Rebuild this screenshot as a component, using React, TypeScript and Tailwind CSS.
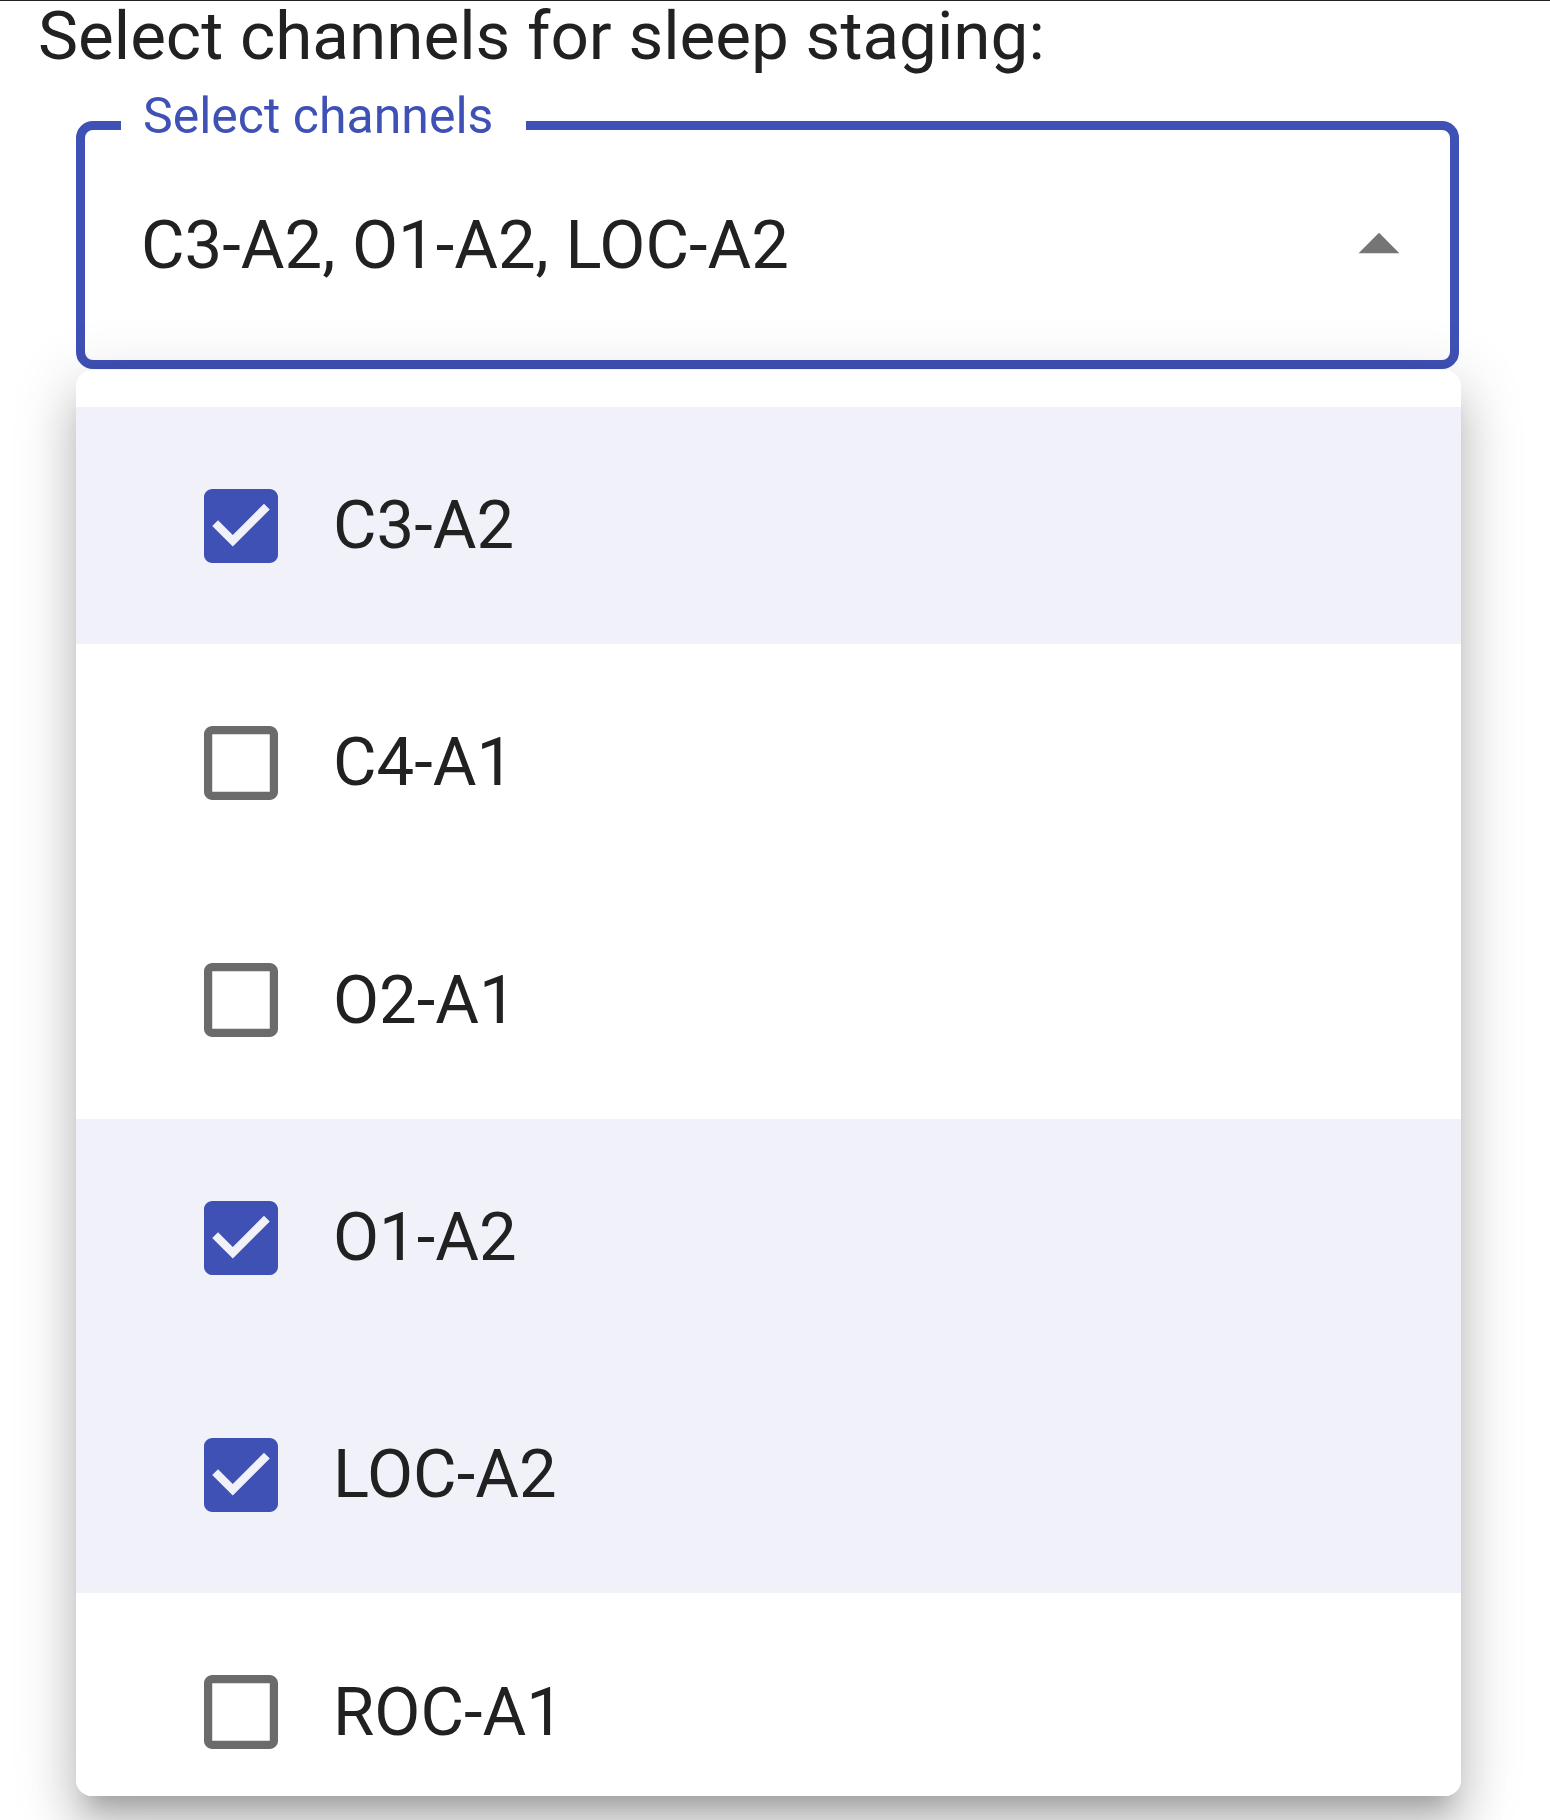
import React from 'react'

const channels = [
  { name: 'C3-A2', checked: true },
  { name: 'C4-A1', checked: false },
  { name: 'O2-A1', checked: false },
  { name: 'O1-A2', checked: true },
  { name: 'LOC-A2', checked: true },
  { name: 'ROC-A1', checked: false },
]

function CheckIcon({ checked }: { checked: boolean }) {
  return (
    <svg width="74" height="74" viewBox="3 3 18 18" className="shrink-0">
      {checked ? (
        <path
          fill="#3f51b5"
          d="M19 3H5c-1.11 0-2 .9-2 2v14c0 1.1.89 2 2 2h14c1.11 0 2-.9 2-2V5c0-1.1-.89-2-2-2zm-9 14l-5-5 1.41-1.41L10 14.17l7.59-7.59L19 8l-9 9z"
        />
      ) : (
        <path
          fill="#6b6b6b"
          d="M19 5v14H5V5h14m0-2H5c-1.1 0-2 .9-2 2v14c0 1.1.9 2 2 2h14c1.1 0 2-.9 2-2V5c0-1.1-.9-2-2-2z"
        />
      )}
    </svg>
  )
}

function App() {
  const selected = channels.filter((c) => c.checked).map((c) => c.name)

  return (
    <div className="min-h-[1820px] w-full overflow-hidden border-t border-[#222] bg-white font-['Roboto',sans-serif] text-[#212121]">
      <h1 className="ml-[38px] pt-[2px] text-[67.4px] font-normal leading-[66px]">
        Select channels for sleep staging:
      </h1>

      <div className="relative ml-[76px] mt-[52px] flex h-[248px] w-[1383px] items-center justify-between rounded-[17px] border-[9px] border-[#3f51b5] pl-[56px] pr-[22px]">
        <span className="absolute left-[36px] top-[-39px] bg-white pl-[22px] pr-[33px] text-[50px] leading-[50px] text-[#3f51b5]">
          Select channels
        </span>
        <span className="text-[67px] leading-[67px]">{selected.join(', ')}</span>
        <svg width="98" height="98" viewBox="0 0 24 24">
          <path fill="#757575" d="M7 14l5-5 5 5z" />
        </svg>
      </div>

      <div className="relative ml-[76px] mt-[1px] h-[1426px] w-[1385px] overflow-hidden rounded-[16px] bg-white pt-[37px] shadow-[0_22px_22px_-13px_rgba(0,0,0,0.2),0_35px_44px_4px_rgba(0,0,0,0.14),0_13px_62px_9px_rgba(0,0,0,0.12)]">
        {channels.map((c) => (
          <div
            key={c.name}
            className={`flex h-[237.3px] items-center gap-[55px] pl-[128px] ${c.checked ? 'bg-[#f0f1f9]' : 'bg-white'}`}
          >
            <CheckIcon checked={c.checked} />
            <span className="text-[67px] leading-[67px]">{c.name}</span>
          </div>
        ))}
      </div>
    </div>
  )
}

export default App
